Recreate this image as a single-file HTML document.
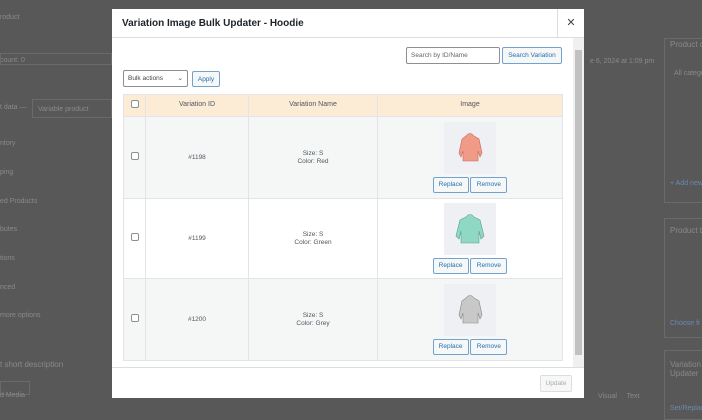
<!DOCTYPE html>
<html><head><meta charset="utf-8"><style>
*{box-sizing:border-box;margin:0;padding:0}
body{width:702px;height:411px;overflow:hidden;background:#585858;font-family:"Liberation Sans",sans-serif;position:relative;color:#3c434a}
.bg{position:absolute;color:#8a8a8a;font-size:7px;white-space:nowrap}
.box{position:absolute;border:1px solid #6a6a6a}
.m{position:absolute;left:112px;top:9px;width:472px;height:389px;background:#fff}
.hd{position:absolute;left:0;top:0;width:472px;height:29px;border-bottom:1px solid #ddd;font-weight:bold;font-size:10px;color:#1d2327;padding:9px 10px}
.x{position:absolute;right:0;top:0;width:27px;height:29px;border-left:1px solid #ddd;text-align:center;line-height:28px;font-size:11px;color:#444}
.sb{position:absolute;left:461px;top:29px;width:11px;height:329px;background:#f0f0f0}
.sb i{position:absolute;left:2px;top:12px;width:7px;height:305px;background:#c1c1c1}
.ft{position:absolute;left:0;top:358px;width:472px;height:31px;border-top:1px solid #ddd}
.btn{position:absolute;border:1px solid #72a3d0;border-radius:2px;background:#f6f7f7;color:#2271b1;font-size:6.5px;text-align:center}
table{position:absolute;left:11px;top:85px;border-collapse:collapse;font-size:6.5px;color:#50575e;line-height:1.2}
td,th{border:1px solid #e2e4e7;text-align:center;font-weight:normal}
th{background:#fcebd5;height:22px;font-size:7px}
.cb{display:inline-block;width:8px;height:8px;border:1px solid #8c8f94;border-radius:2px;background:#fff}
.img{width:52px;height:52px;background:#eef0f3;margin:0 auto 3px;position:relative}
</style></head><body>
<div class="bg" style="left:0;top:14px">roduct</div>
<div class="bg" style="left:0;top:57px">count: 0</div>
<div class="box" style="left:0;top:53px;width:112px;height:12px"></div>
<div class="bg" style="left:0;top:104px">t data —</div>
<div class="box" style="left:32px;top:99px;width:80px;height:19px"></div>
<div class="bg" style="left:38px;top:106px">Variable product</div>
<div class="bg" style="left:0;top:140px">ntory</div>
<div class="bg" style="left:0;top:169px">ping</div>
<div class="bg" style="left:0;top:198px">ed Products</div>
<div class="bg" style="left:0;top:226px">butes</div>
<div class="bg" style="left:0;top:255px">tions</div>
<div class="bg" style="left:0;top:284px">nced</div>
<div class="bg" style="left:0;top:312px">more options</div>
<div class="bg" style="left:0;top:360px;font-size:8px">t short description</div>
<div class="box" style="left:0;top:381px;width:30px;height:14px"></div>
<div class="bg" style="left:0;top:392px">d Media</div>
<div class="bg" style="left:590px;top:58px">e 6, 2024 at 1:09 pm</div>
<div class="box" style="left:664px;top:38px;width:40px;height:165px"></div>
<div class="bg" style="left:670px;top:40px;font-size:8px">Product c</div>
<div class="bg" style="left:674px;top:70px">All catego</div>
<div class="bg" style="left:670px;top:180px;color:#6a8ab0">+ Add new</div>
<div class="box" style="left:664px;top:218px;width:40px;height:120px"></div>
<div class="bg" style="left:670px;top:226px;font-size:8px">Product t</div>
<div class="bg" style="left:670px;top:320px;color:#6a8ab0">Choose fr</div>
<div class="box" style="left:664px;top:350px;width:40px;height:70px"></div>
<div class="bg" style="left:670px;top:360px;font-size:8px">Variation<br>Updater</div>
<div class="bg" style="left:670px;top:405px;color:#6a8ab0">Set/Replac</div>
<div class="bg" style="left:598px;top:393px">Visual&nbsp;&nbsp;&nbsp;&nbsp;&nbsp;Text</div>

<div class="m">
<div class="hd">Variation Image Bulk Updater - Hoodie</div>
<div class="x">✕</div>
<div style="position:absolute;left:294px;top:38px;width:94px;height:17px;border:1px solid #8c8f94;border-radius:2px;font-size:6.5px;color:#666;padding:4px 4px">Search by ID/Name</div>
<div class="btn" style="left:390px;top:38px;width:60px;height:17px;line-height:15px">Search Variation</div>
<div style="position:absolute;left:11px;top:61px;width:65px;height:17px;border:1px solid #8c8f94;border-radius:2px;font-size:6.5px;color:#444;padding:4px 4px">Bulk actions<span style="position:absolute;right:4px;top:3px">⌄</span></div>
<div class="btn" style="left:80px;top:62px;width:28px;height:16px;line-height:15px">Apply</div>
<table>
<tr><th style="width:22px"><span class="cb"></span></th><th style="width:103px">Variation ID</th><th style="width:129px">Variation Name</th><th style="width:185px">Image</th></tr>
<tr style="background:#f5f7f7;height:82px"><td><span class="cb"></span></td><td>#1198</td><td>Size: S<br>Color: Red</td><td><div class="img"><svg width="52" height="52" viewBox="0 0 52 52"><path d="M22 14q4-5 8 0l5 3 3 14-2 4-2-6v10H19V29l-2 6-2-4 3-14z" fill="#f09a88" stroke="#c96a5a" stroke-width=".6"/></svg></div><span class="btn" style="position:relative;display:inline-block;width:36px;height:16px;line-height:14px">Replace</span> <span class="btn" style="position:relative;display:inline-block;width:37px;height:16px;line-height:14px">Remove</span></td></tr>
<tr style="background:#fff;height:80px"><td><span class="cb"></span></td><td>#1199</td><td>Size: S<br>Color: Green</td><td><div class="img"><svg width="52" height="52" viewBox="0 0 52 52"><path d="M22 14q4-5 8 0l6 3 4 16-3 3-2-8v12H17V28l-2 8-3-3 4-16z" fill="#8fd8c4" stroke="#5aa090" stroke-width=".6"/></svg></div><span class="btn" style="position:relative;display:inline-block;width:36px;height:16px;line-height:14px">Replace</span> <span class="btn" style="position:relative;display:inline-block;width:37px;height:16px;line-height:14px">Remove</span></td></tr>
<tr style="background:#f5f7f7;height:82px"><td><span class="cb"></span></td><td>#1200</td><td>Size: S<br>Color: Grey</td><td><div class="img"><svg width="52" height="52" viewBox="0 0 52 52"><path d="M22 14q4-5 8 0l5 3 3 14-2 4-2-6v10H19V29l-2 6-2-4 3-14z" fill="#c8c8c8" stroke="#888" stroke-width=".6"/></svg></div><span class="btn" style="position:relative;display:inline-block;width:36px;height:16px;line-height:14px">Replace</span> <span class="btn" style="position:relative;display:inline-block;width:37px;height:16px;line-height:14px">Remove</span></td></tr>
</table>
<div class="sb"><i></i></div>
<div class="ft"><div style="position:absolute;left:428px;top:7px;width:32px;height:17px;border:1px solid #ddd;border-radius:2px;background:#f6f7f7;color:#aaa;font-size:6.5px;text-align:center;line-height:15px">Update</div></div>
</div>
</body></html>
